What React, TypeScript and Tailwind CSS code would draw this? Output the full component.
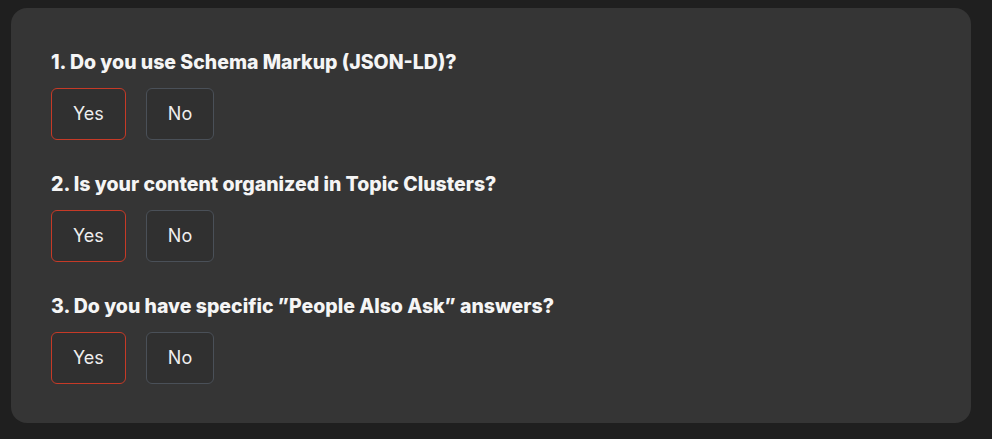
import React from "react";

const questions = [
  "1. Do you use Schema Markup (JSON-LD)?",
  "2. Is your content organized in Topic Clusters?",
  "3. Do you have specific \u201DPeople Also Ask\u201D answers?",
];

export default function App() {
  return (
    <div className="min-h-[439px] w-full bg-[#1f1f1f] pt-2 pl-[11px]" style={{ fontFamily: "Inter, 'Noto Sans', sans-serif" }}>
      <div className="w-[960px] rounded-2xl bg-[#353535] px-10 pt-10 pb-[39px] flex flex-col gap-[30px]">
        {questions.map((q) => (
          <div key={q} className="flex flex-col gap-3">
            <h2 className="text-[19.5px] leading-7 font-extrabold text-[#f5f5f5]">{q}</h2>
            <div className="flex gap-5">
              <button className="h-[52px] px-[21px] rounded-md border border-[#c63a27] bg-[#303030] text-lg text-[#eeeeee]">Yes</button>
              <button className="h-[52px] px-[21px] rounded-md border border-[#4a5058] bg-[#303030] text-lg text-[#eeeeee]">No</button>
            </div>
          </div>
        ))}
      </div>
    </div>
  );
}
